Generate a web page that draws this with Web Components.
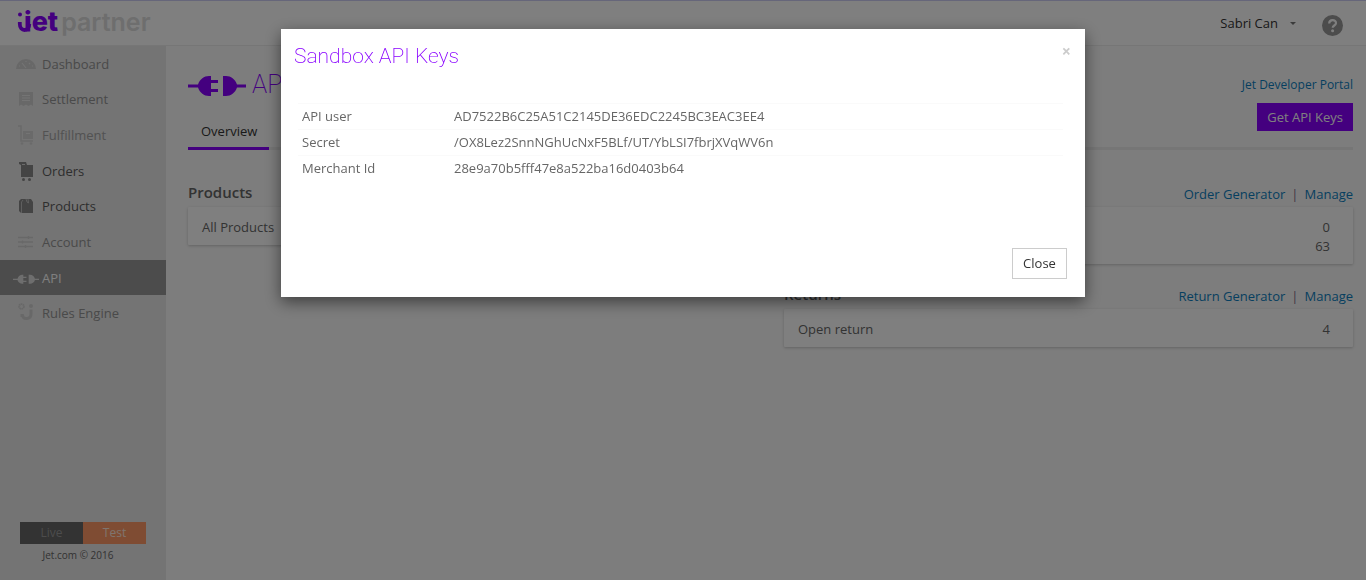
<!DOCTYPE html>
<html lang="en">
<head>
<meta charset="utf-8">
<title>Jet Partner – API</title>
<style>
html, body { margin: 0; min-height: 100%; }
body { font: 13px/20px "Open Sans", "Noto Sans", sans-serif; color: #666; background: #fafafa; }
</style>
</head>
<body>
<jet-app></jet-app>

<template id="t-app">
<style>
:host { display: flex; flex-direction: column; min-height: 100vh; box-sizing: border-box; border-top: 1px solid #ccccf5; }
.body { flex: 1; display: flex; }
main { flex: 1; min-width: 0; padding: 23px 13px 0 22px; }
.top { display: flex; justify-content: space-between; }
h1 { margin: 0; display: flex; align-items: center; gap: 6px; height: 32px; color: #8800ff; font: 200 25px/32px Roboto, sans-serif; }
h1 svg { width: 58px; height: 20px; fill: #8800ff; margin-top: 1px; }
.side { display: flex; flex-direction: column; align-items: flex-end; gap: 8px; padding-top: 6px; }
a { color: #0d7fc0; text-decoration: none; }
.side a { font-size: 12px; }
button { font: inherit; border: 0; background: #8800ff; color: #fff; height: 28px; padding: 0 10px; }
.tabs { display: flex; border-bottom: 3px solid #ececec; margin-top: -10px; }
.tabs a { color: #333; padding: 0 12px 6px 13px; border-bottom: 3px solid #8800ff; margin-bottom: -3px; }
.cols { display: grid; grid-template-columns: 1fr 1fr; gap: 27px; padding-top: 31px; }
.col { display: flex; flex-direction: column; gap: 19px; }
</style>
<jet-header></jet-header>
<div class="body">
  <jet-sidebar></jet-sidebar>
  <main>
    <div class="top">
      <h1><svg viewBox="0 0 58 20"><path d="M0 8.500h10C12 3 16 0 21 0h2v4h7v3h-7v6h7v3h-7v4h-2c-5 0-9-3-11-8.500H0zM35 0h3c5 0 9 3 11 8.500h9v3h-9C47 17 43 20 38 20h-3z"/></svg>API</h1>
      <div class="side"><a href="#">Jet Developer Portal</a><button type="button">Get API Keys</button></div>
    </div>
    <nav class="tabs"><a href="#">Overview</a></nav>
    <div class="cols">
      <div class="col"><jet-panel label="Products"><jet-row label="All Products"></jet-row></jet-panel></div>
      <div class="col">
        <jet-panel><a slot="links" href="#">Order Generator</a><a slot="manage" href="#">Manage</a><jet-row value="0"></jet-row><jet-row value="63"></jet-row></jet-panel>
        <jet-panel label="Returns"><a slot="links" href="#">Return Generator</a><a slot="manage" href="#">Manage</a><jet-row label="Open return" value="4"></jet-row></jet-panel>
      </div>
    </div>
  </main>
</div>
<jet-modal label="Sandbox API Keys">
  <jet-keys></jet-keys>
</jet-modal>
</template>

<template id="t-header">
<style>
:host { display: flex; justify-content: space-between; align-items: center; height: 44px; border-bottom: 1px solid #ececec; background: #fff; padding: 0 23px 0 17px; }
.logo { display: flex; align-items: baseline; gap: 3px; font: 600 25px/30px Inter, sans-serif; color: #dcdcdc; padding-bottom: 3px; }
.jet { position: relative; color: #8800ff; font-weight: 800; font-size: 27px; padding-left: 7px; }
.word { display: block; clip-path: inset(0 0 5px 0); }
.jet svg { position: absolute; left: 0; top: 0; width: 16px; height: 30px; }
.user { display: flex; align-items: center; color: #333; gap: 12px; }
.user button { all: unset; display: flex; align-items: center; gap: 12px; }
.caret { border: 3px solid transparent; border-top-color: #777; border-bottom: 0; }
.help { width: 21px; height: 21px; margin: 4px 0 0 14px; }
</style>
<div class="logo"><span class="jet"><svg viewBox="0 0 16 30"><circle cx="3" cy="7.500" r="2" fill="#80f"/><path d="M2.800 15v2c0 8 9.500 8 9.500 0" fill="none" stroke="#80f" stroke-width="3.800"/></svg><span class="word">jet</span></span><span>partner</span></div>
<div class="user"><button type="button">Sabri Can<span class="caret"></span></button>
<svg class="help" viewBox="0 0 21 21" role="img" aria-label="Help"><circle cx="10.500" cy="10.500" r="10.500" fill="#999"/><path d="M7.200 8.500c0-4.500 6.800-4.500 6.800-.5 0 2.500-3.300 2.500-3.300 4.800" fill="none" stroke="#fff" stroke-width="2.200"/><circle cx="10.600" cy="15.800" r="1.500" fill="#fff"/></svg></div>
</template>

<template id="t-sidebar">
<style>
:host { display: flex; flex-direction: column; justify-content: space-between; width: 166px; background: #e8e8e8; padding-bottom: 17px; box-sizing: border-box; flex: none; }
nav { display: grid; grid-auto-rows: 1fr; height: 285px; }
.foot { padding: 0 20px; text-align: center; font-size: 10px; line-height: 16px; }
.env { display: grid; grid-template-columns: 1fr 1fr; margin-bottom: 3px; }
.env button { border: 0; padding: 0; height: 22px; font: 12px/22px "Open Sans", sans-serif; background: #666; color: #999; }
.env .on { background: #ff9966; color: #ffe8dd; }
.foot p { margin: 0; padding-right: 10px; }
</style>
<nav>
<jet-nav-item tone="mid" label="Dashboard"><svg viewBox="0 0 26 20"><path d="M3 15a10 10 0 0 1 20 0z" fill="#d0d0d0"/><path d="M13 14L9 9M6 12h1M19 12h1M13 7v1M17 9l-1 1" stroke="#e8e8e8" stroke-width="1.200"/></svg></jet-nav-item>
<jet-nav-item tone="mid" label="Settlement"><svg viewBox="0 0 26 20"><path d="M6 3h14v14l-2-1.500L15.500 17 13 15.500 10.500 17 8 15.500 6 17z" fill="#d0d0d0"/><path d="M9 6.500h8M9 9h8M9 11.500h8" stroke="#e8e8e8"/></svg></jet-nav-item>
<jet-nav-item tone="light" label="Fulfillment"><svg viewBox="0 0 26 20"><path d="M5 1h3v15h12" stroke="#d4d4d4" fill="none" stroke-width="1.500"/><path d="M10 6h10v8H10z" fill="#d4d4d4"/><path d="M13 8.500h4" stroke="#e8e8e8"/><circle cx="9" cy="18.500" r="1.300" fill="#d4d4d4"/><circle cx="18" cy="18.500" r="1.300" fill="#d4d4d4"/></svg></jet-nav-item>
<jet-nav-item tone="dark" label="Orders"><svg viewBox="0 0 26 20"><path d="M6 1h7l1 3h6v12H8V4L6 3z" fill="#888"/><path d="M9 3.500h3" stroke="#d8d8d8"/><circle cx="10.500" cy="18.500" r="1.500" fill="#888"/><circle cx="16.500" cy="18.500" r="1.500" fill="#888"/></svg></jet-nav-item>
<jet-nav-item tone="dark" label="Products"><svg viewBox="0 0 26 20"><path d="M6 5l2-2h10l2 3v11H8l-2-2z" fill="#888"/><path d="M8.500 17V6l1.500-2M13 3l1 3 1.500 1L15 3" stroke="#ccc" fill="none" stroke-width=".8"/></svg></jet-nav-item>
<jet-nav-item tone="mid" label="Account"><svg viewBox="0 0 26 20"><path d="M5 5.500h15M5 10h15M5 14.500h15M15.500 4v3M9.500 8.500v3M12.500 13v3" stroke="#d0d0d0" stroke-width="1.300"/></svg></jet-nav-item>
<jet-nav-item tone="active" label="API"><svg viewBox="0 -3 58 20"><path d="M0 8.500h10C12 3 16 0 21 0h2v4h7v3h-7v6h7v3h-7v4h-2c-5 0-9-3-11-8.500H0zM35 0h3c5 0 9 3 11 8.500h9v3h-9C47 17 43 20 38 20h-3z" fill="#ddd"/></svg></jet-nav-item>
<jet-nav-item tone="mid" label="Rules Engine"><svg viewBox="0 0 26 20"><circle cx="8.500" cy="3.500" r="2.400" fill="none" stroke="#d0d0d0" stroke-width="1.800" stroke-dasharray="1.500 .4"/><circle cx="18" cy="3" r="2" fill="#d0d0d0"/><path d="M7.500 12.500h2c1 4.500 8.500 4 8.500-1.500V6.500" fill="none" stroke="#d0d0d0" stroke-width="3"/></svg></jet-nav-item>
</nav>
<div class="foot"><div class="env"><button type="button">Live</button><button type="button" class="on">Test</button></div><p>Jet.com © 2016</p></div>
</template>

<template id="t-nav-item">
<style>
:host { display: block; }
a { display: flex; align-items: center; gap: 3px; height: 100%; padding-left: 13px; color: #949494; text-decoration: none; box-sizing: border-box; }
:host([tone="light"]) a { color: #a4a4a4; }
:host([tone="dark"]) a { color: #5c5c5c; }
:host([tone="active"]) { background: #999; }
:host([tone="active"]) a { color: #fff; }
::slotted(svg) { width: 26px; height: 20px; overflow: visible; }
</style>
<a href="#"><slot></slot><span id="label"></span></a>
</template>

<template id="t-panel">
<style>
:host { display: block; }
header { display: flex; justify-content: space-between; height: 26px; }
h2 { margin: 0; font-size: 15px; line-height: 22px; font-weight: 600; }
.links { display: flex; gap: 6px; line-height: 26px; color: #86708a; }
.card { background: #fff; box-shadow: 0 1px 3px rgba(0,0,0,.2); padding: 11px 23px 8px 14px; border-radius: 1px; }
</style>
<header><h2 id="label"></h2><div class="links" id="links"><slot name="links"></slot><span>|</span><slot name="manage"></slot></div></header>
<div class="card"><slot></slot></div>
</template>

<template id="t-row">
<style>:host { display: flex; justify-content: space-between; min-height: 19px; line-height: 19px; }</style>
<span id="label"></span><span id="value"></span>
</template>

<template id="t-modal">
<style>
:host { position: fixed; inset: 0; background: rgba(0,0,0,.5); }
.box { width: 804px; max-width: calc(100% - 20px); margin: 29px auto 0; box-sizing: border-box; min-height: 268px; background: #fff; box-shadow: 0 5px 15px rgba(0,0,0,.5); padding: 12px 18px 18px 13px; display: flex; flex-direction: column; }
header { display: flex; justify-content: space-between; height: 62px; margin-right: -4px; }
h2 { margin: 0; font: 200 21px/30px Roboto, sans-serif; color: #8800ff; }
.x { all: unset; font: 700 16px/20px "Open Sans", sans-serif; color: #ccc; height: 20px; }
footer { display: flex; justify-content: flex-end; margin-top: auto; }
.close { font: 13px/20px "Open Sans", sans-serif; color: #333; background: #fff; border: 1px solid #ccc; height: 31px; width: 55px; padding: 0 0 2px; }
</style>
<div class="box" role="dialog" aria-modal="true">
<header><h2 id="label"></h2><button class="x" type="button" aria-label="Dismiss">×</button></header>
<slot></slot>
<footer><button class="close" type="button">Close</button></footer>
</div>
</template>

<template id="t-keys">
<style>
:host { display: block; padding: 0 4px; }
table { width: 100%; border-collapse: collapse; table-layout: fixed; }
th, td { border-top: 1px solid #fafafa; text-align: left; font-weight: 400; padding: 2px 4px 3px; line-height: 20px; }
th { width: 144px; }
</style>
<table><tbody>
<tr><th scope="row">API user</th><td>AD7522B6C25A51C2145DE36EDC2245BC3EAC3EE4</td></tr>
<tr><th scope="row">Secret</th><td>/OX8Lez2SnnNGhUcNxF5BLf/UT/YbLSI7fbrjXVqWV6n</td></tr>
<tr><th scope="row">Merchant Id</th><td>28e9a70b5fff47e8a522ba16d0403b64</td></tr>
</tbody></table>
</template>

<script>
class JetElement extends HTMLElement {
  connectedCallback() {
    if (this.shadowRoot) return;
    const root = this.attachShadow({ mode: "open" });
    root.append(document.getElementById(this.constructor.template).content.cloneNode(true));
    for (const key of ["label", "value"]) {
      const el = root.getElementById(key);
      if (el) el.textContent = this.getAttribute(key) || "";
    }
    this.ready(root);
  }
  ready() {}
}
const define = (name, template, base = JetElement) =>
  customElements.define(name, class extends base { static template = template; });

class PanelBase extends JetElement {
  ready(root) {
    if (!this.querySelector("[slot=links]")) root.getElementById("links").remove();
  }
}
define("jet-header", "t-header");
define("jet-nav-item", "t-nav-item");
define("jet-sidebar", "t-sidebar");
define("jet-row", "t-row");
define("jet-panel", "t-panel", PanelBase);
define("jet-keys", "t-keys");
define("jet-modal", "t-modal");
define("jet-app", "t-app");
</script>
</body>
</html>
